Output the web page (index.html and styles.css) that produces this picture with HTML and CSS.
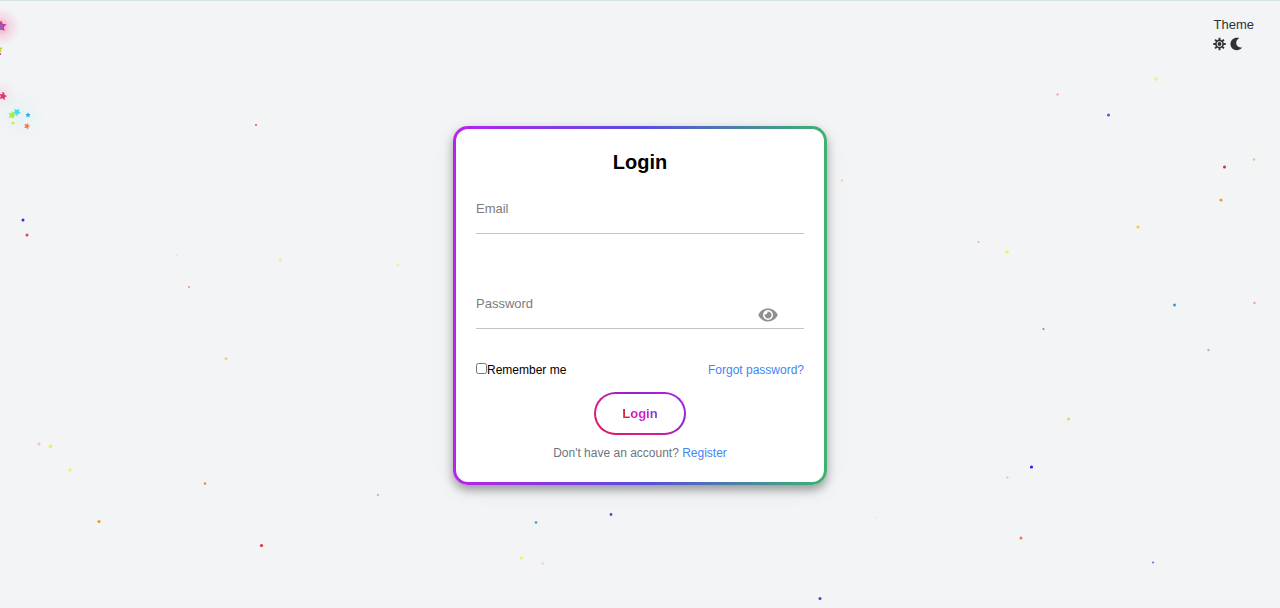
FILE: index.html
```html
<!DOCTYPE html>
<html lang="en">
<head>
<meta charset="utf-8">
<meta name="viewport" content="width=device-width, initial-scale=1">
<title>Login</title>
<link rel="stylesheet" href="styles.css">
</head>
<body class="page">
<svg class="particles" aria-hidden="true">
  <defs>
    <radialGradient id="glow"><stop offset="0" stop-color="#ff1478" stop-opacity=".36"/><stop offset=".5" stop-color="#ff1478" stop-opacity=".12"/><stop offset="1" stop-color="#ff1478" stop-opacity="0"/></radialGradient>
    <radialGradient id="haze"><stop offset="0" stop-color="#c8f0f0" stop-opacity=".3"/><stop offset="1" stop-color="#c8f0f0" stop-opacity="0"/></radialGradient>
    <path id="star" d="M0-4 1.3-1.5 4-1.2 2 .8 2.6 3.6 0 2.2-2.6 3.6-2 .8-4-1.2-1.3-1.5Z"/>
  </defs>
  <circle cx="1" cy="27" r="19" fill="url(#glow)"/>
  <circle cx="2" cy="95" r="16" fill="url(#glow)" opacity=".3"/>
  <circle cx="20" cy="115" r="24" fill="url(#haze)"/>
  <use href="#star" transform="translate(1 26) scale(1.4)" fill="#e22a86"/>
  <circle cx="0" cy="27" r="3" fill="#8b63bd"/>
  <use href="#star" transform="translate(-1 49)" fill="#cdd52f"/>
  <circle cx="0" cy="54" r="1" fill="#e01a70"/>
  <use href="#star" transform="translate(3 96) rotate(15)" fill="#e0336f"/>
  <circle cx="3" cy="93" r="1" fill="#b17a42"/>
  <use href="#star" transform="translate(12 115) rotate(12)" fill="#a8ef3c"/>
  <use href="#star" transform="translate(17 112) rotate(35)" fill="#43def3"/>
  <use href="#star" transform="translate(28 115) scale(.65)" fill="#25aee8"/>
  <use href="#star" transform="translate(13 123) scale(.5)" fill="#c9e845"/>
  <use href="#star" transform="translate(27 126) scale(.8) rotate(18)" fill="#ef813e"/>
  <g class="dots-strong">
    <circle cx="23" cy="220" r="1.5" fill="#3b28dc"/><circle cx="27" cy="235" r="1.5" fill="#ec4050"/>
    <circle cx="256" cy="125" r="1" fill="#ee5148"/><circle cx="99" cy="521.5" r="1.6" fill="#e99b23"/>
    <circle cx="261.5" cy="545.5" r="1.6" fill="#ee2d36"/><circle cx="205" cy="483.5" r="1.2" fill="#e87c53"/>
    <circle cx="1108.5" cy="115" r="1.5" fill="#5850db"/><circle cx="1224.5" cy="167" r="1.5" fill="#df2440"/>
    <circle cx="1221" cy="200" r="1.6" fill="#f19a36"/><circle cx="1138" cy="227" r="1.6" fill="#eed42c"/>
    <circle cx="1174.5" cy="305" r="1.5" fill="#3c9bd6"/><circle cx="1068.5" cy="419" r="1.6" fill="#e9d94a"/>
    <circle cx="1031.5" cy="467" r="1.6" fill="#2c1ef0"/><circle cx="1021" cy="538" r="1.5" fill="#ee7a4b"/>
    <circle cx="611" cy="514.5" r="1.4" fill="#5545cf"/><circle cx="820" cy="598.5" r="1.5" fill="#5538df"/>
    <circle cx="536" cy="522.5" r="1.4" fill="#56a9dc"/>
  </g>
  <g class="dots-soft">
    <circle cx="189" cy="287" r="1.1" fill="#e99462"/><circle cx="226" cy="358.5" r="1.6" fill="#f0d45c"/>
    <circle cx="280.5" cy="260" r="1.7" fill="#f5ec94"/><circle cx="398" cy="265.5" r="1.4" fill="#f2ef9f"/>
    <circle cx="177" cy="255" r="1" fill="#dfe5dc"/><circle cx="39" cy="444" r="1.5" fill="#f4bdc2"/>
    <circle cx="50.5" cy="446.5" r="1.8" fill="#f1f046"/><circle cx="70" cy="470" r="1.7" fill="#f3f35e"/>
    <circle cx="378" cy="495" r="1.2" fill="#8fcbdc"/><circle cx="243" cy="574" r="1.5" fill="#f4f5dc"/>
    <circle cx="1057.5" cy="94.5" r="1.1" fill="#f08c90"/><circle cx="1156" cy="79" r="1.7" fill="#f2ee65"/>
    <circle cx="1254" cy="159.5" r="1.2" fill="#eebc80"/><circle cx="978.5" cy="242" r="1.1" fill="#f2aab2"/>
    <circle cx="1007" cy="252" r="1.7" fill="#f4ef48"/><circle cx="1082" cy="230" r="1.2" fill="#f1f2d2"/>
    <circle cx="1254.5" cy="303" r="1.2" fill="#f39696"/><circle cx="1043.5" cy="329" r="1.1" fill="#8179d2"/>
    <circle cx="1208.5" cy="350" r="1.2" fill="#9db8cf"/><circle cx="1007.5" cy="477.5" r="1.1" fill="#b7c3db"/>
    <circle cx="1153" cy="562.5" r="1.1" fill="#7464d5"/><circle cx="842" cy="180.5" r="1.2" fill="#f4c7b2"/>
    <circle cx="521.5" cy="558" r="1.7" fill="#f3ed7c"/><circle cx="543" cy="563.5" r="1.5" fill="#f4d5da"/>
    <circle cx="876" cy="517.5" r="1" fill="#e5e8eb"/>
  </g>
</svg>

<aside class="theme">
  <span>Theme</span>
  <div class="theme-options">
    <button class="icon-button" type="button" aria-label="Light theme">
      <svg class="theme-icon" viewBox="0 0 14 14"><g stroke="#2f3337" fill="none"><g stroke-width="2"><path d="M7 .3v3M7 10.700v3M.3 7h3M10.700 7h3M2.200 2.200l2.200 2.200M9.600 9.600l2.200 2.200M2.200 11.800l2.200-2.200M9.600 4.400l2.200-2.200"/></g><circle cx="7" cy="7" r="3.900" stroke-width="1.700"/></g><circle cx="7" cy="7" r="2.100" fill="#2f3337"/></svg>
    </button>
    <button class="icon-button" type="button" aria-label="Dark theme">
      <svg class="theme-icon" viewBox="0 0 14 14"><path d="M9.300.4C4.800-.7 .5 2.500 .5 7c0 6 7.400 9 12.200 4.400.3-.3.100-.7-.3-.7C6.700 11.500 4.500 4.500 9.400 1.200c.3-.2.300-.7-.1-.8Z" fill="#2f3337"/></svg>
    </button>
  </div>
</aside>

<main class="stage">
  <form class="card">
    <h1 class="title">Login</h1>
    <div class="field">
      <label for="email">Email</label>
      <input class="text-input" id="email" type="email">
    </div>
    <div class="field">
      <label for="password">Password</label>
      <input class="text-input" id="password" type="password">
      <button class="icon-button reveal" type="button" aria-label="Show password">
        <svg class="eye" viewBox="0 0 20 14"><path fill="#8f8f8f" fill-rule="evenodd" d="M.5 6.400C2.300 2.800 5.800.5 10 .5s7.700 2.300 9.500 5.900q.3.600 0 1.200C17.700 11.200 14.200 13.500 10 13.500S2.300 11.200.5 7.600q-.3-.6 0-1.200ZM10 2a5 5 0 1 0 0 10A5 5 0 0 0 10 2Z"/><path fill="#8f8f8f" d="M9.300 3.600A3.500 3.500 0 1 1 6.700 6.100a1.900 1.900 0 0 0 2.600-2.500Z"/></svg>
      </button>
    </div>
    <div class="options">
      <label class="remember"><input class="check" type="checkbox">Remember me</label>
      <a class="link" href="#forgot">Forgot password?</a>
    </div>
    <button class="submit" type="submit"><span class="submit-text">Login</span></button>
    <p class="signup">Don't have an account? <a class="link" href="#register">Register</a></p>
  </form>
</main>
</body>
</html>
```
FILE: styles.css
```css
* { box-sizing: border-box; }

.page {
  margin: 0;
  min-height: 100vh;
  display: flex;
  flex-direction: column;
  position: relative;
  border-top: 1px solid #d5e2e3;
  background: #f2f4f6;
  color: #000;
  font: 13px/16px "Liberation Sans", Arial, sans-serif;
}

.particles {
  position: absolute;
  top: -1px;
  left: 0;
  width: 100%;
  height: 100%;
  pointer-events: none;
}

.dots-soft { opacity: .9; }

.theme {
  position: absolute;
  top: 16px;
  right: 26px;
  color: #2f3337;
}

.theme-options { display: flex; gap: 4px; margin: 4px 0 0 -1px; }

.icon-button {
  display: flex;
  padding: 0;
  border: 0;
  background: none;
  cursor: pointer;
}

.theme-icon { width: 13px; height: 14px; }

.stage {
  flex: 1;
  display: flex;
  align-items: center;
  justify-content: center;
  padding: 18px 16px 16px;
}

.card {
  position: relative;
  display: flex;
  flex-direction: column;
  width: 100%;
  max-width: 374px;
  padding: 20px;
  border: 3px solid transparent;
  border-radius: 15px;
  background:
    linear-gradient(#fff, #fff) padding-box,
    linear-gradient(to right, #b822ee, #5b4be0 50%, #3cb371) border-box;
  box-shadow: 0 5px 10px rgba(0, 0, 0, .34), 0 5px 24px rgba(0, 0, 0, .06);
}

.title {
  margin: 0 0 26px;
  font-size: 20px;
  line-height: 26px;
  text-align: center;
}

.field {
  position: relative;
  display: flex;
  flex-direction: column;
  margin-bottom: 62px;
  color: #7c7c7c;
}

.field + .field { margin-bottom: 32px; }

.text-input {
  width: 100%;
  height: 17px;
  padding: 0;
  border: 0;
  border-bottom: 1px solid #c4c4c4;
  background: none;
  font: inherit;
  outline: none;
}

.reveal {
  position: absolute;
  right: 26px;
  bottom: 7px;
}

.eye { width: 20px; height: 14px; }

.options {
  display: flex;
  justify-content: space-between;
  margin-bottom: 13px;
  font-size: 12px;
  line-height: 18px;
}

.remember { display: flex; }

.check { width: 11px; height: 11px; margin: 2px 0 0; }

.link { color: #4285f4; text-decoration: none; }

.submit {
  align-self: center;
  padding: 12px 26px;
  border: 2px solid transparent;
  border-radius: 22px;
  background:
    linear-gradient(#fff, #fff) padding-box,
    linear-gradient(30deg, #dc1a50, #d91b91 35%, #8f25cc 65%, #b820e6) border-box;
  font: bold 13px/15px "Liberation Sans", Arial, sans-serif;
  cursor: pointer;
}

.submit-text {
  display: block;
  background: linear-gradient(60deg, #b96b0a, #d4263f 15%, #c522d5 40%, #e01bc0 60%, #7143df 80%, #5559dc);
  background-clip: text;
  -webkit-background-clip: text;
  color: transparent;
}

.signup {
  margin: 9px 0 0;
  color: #6c757d;
  font-size: 12px;
  line-height: 18px;
  text-align: center;
}
```
